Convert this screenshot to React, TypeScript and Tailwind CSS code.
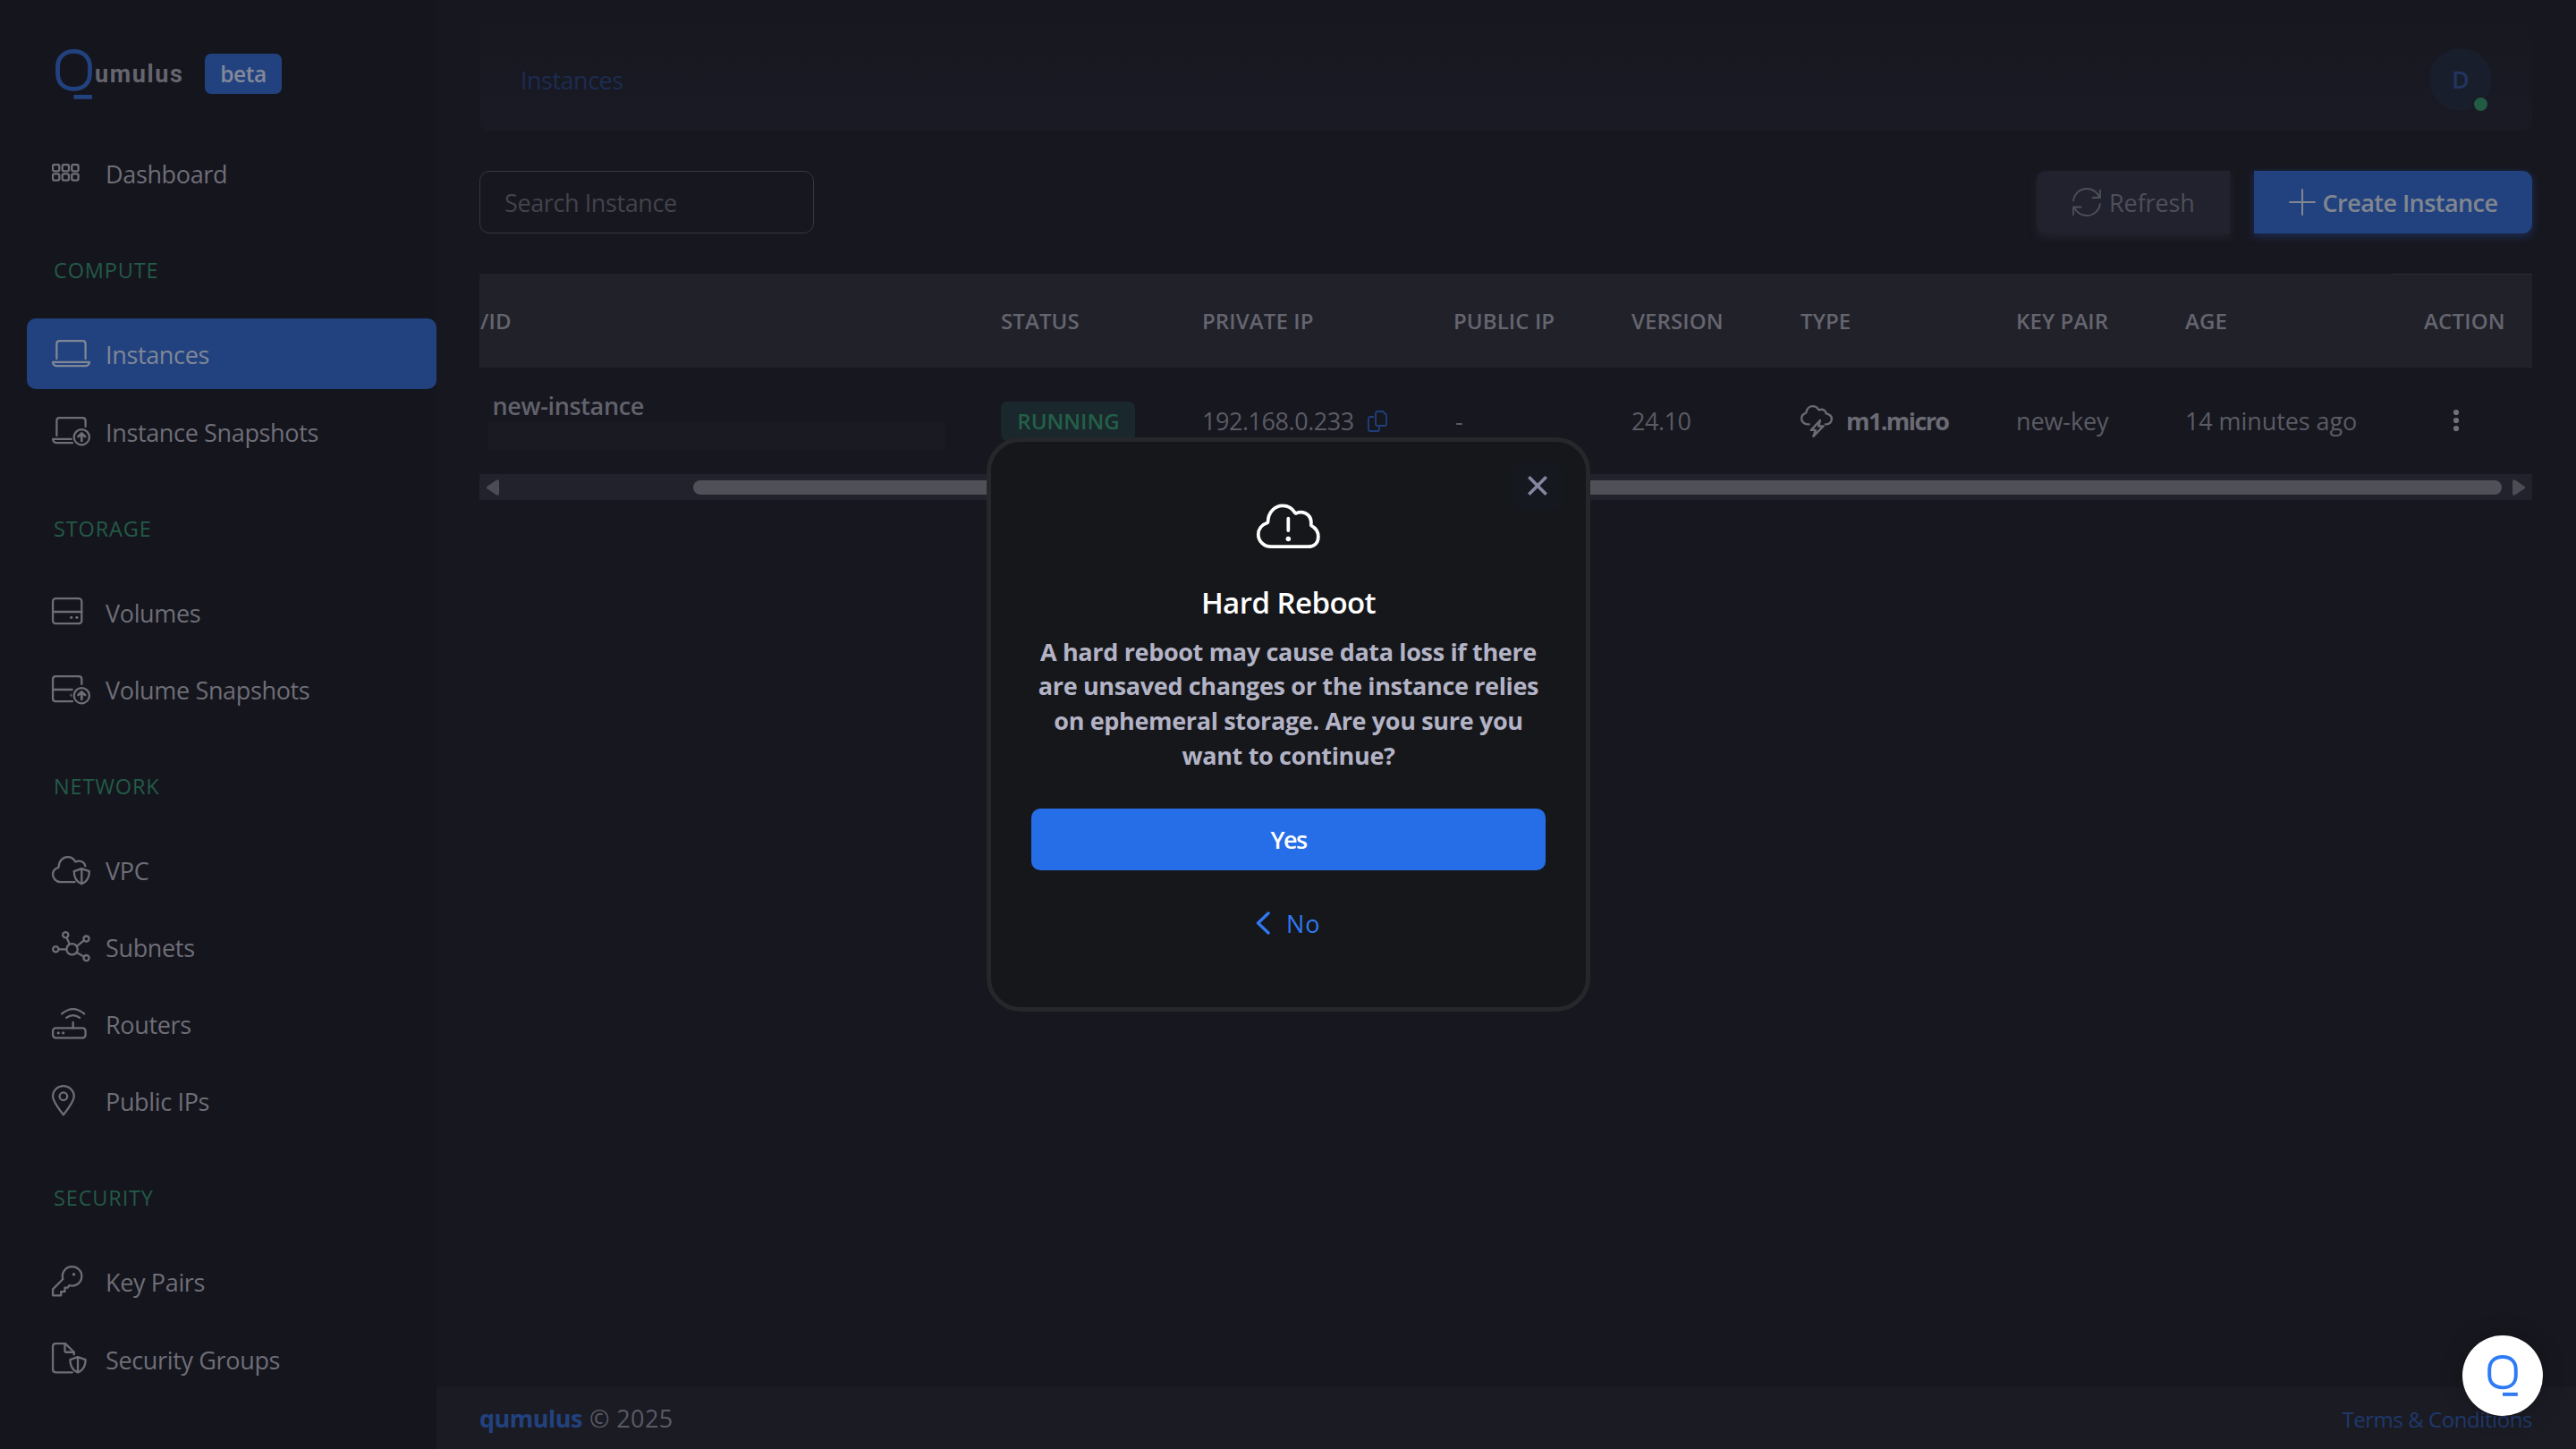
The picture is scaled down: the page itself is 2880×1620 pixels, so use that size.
import type { ReactNode } from "react";
import { clsx } from "clsx";

interface IconProps {
    w: number;
    children: ReactNode;
    className?: string;
}

// Light line icons, drawn on a 512 unit high grid
function Icon({ w, children, className = "h-[34.4px]" }: IconProps) {
    return (
        <svg
            viewBox={`0 0 ${w} 512`}
            className={clsx("w-auto overflow-visible", className)}
            fill="none"
            stroke="currentColor"
            strokeWidth={34}
            strokeLinecap="round"
            strokeLinejoin="round"
        >
            {children}
        </svg>
    );
}

const Dot = ({ x, y, r = 24 }: { x: number; y: number; r?: number }) => (
    <circle cx={x} cy={y} r={r} fill="currentColor" stroke="none" />
);

const UpBadge = () => (
    <>
        <circle cx="496" cy="368" r="128" />
        <path d="M496 432V308M440 358l56-54 56 54" strokeWidth="40" />
    </>
);

const Shield = ({ x = 0 }: { x?: number }) => (
    <path d={`M${496 + x} 240l-128 44c0 92 38 176 128 212c90-36 128-120 128-212zV496`} />
);

const GridIcon = () => (
    <svg viewBox="0 0 31 20" className="w-[31px] h-5" fill="none" stroke="currentColor" strokeWidth="2.3">
        {[1, 11.7, 22.3].map((x) => [1, 11.3].map((y) => (
            <rect key={`${x}-${y}`} x={x} y={y} width="7.3" height="7.3" rx="1.8" />
        )))}
    </svg>
);

const LaptopIcon = () => (
    <Icon w={640}>
        <path d="M80 344V96c0-27 21-48 48-48h384c27 0 48 21 48 48v248" />
        <path d="M16 400h608c0 35-29 64-64 64H80c-35 0-64-29-64-64z" />
    </Icon>
);

const LaptopUpIcon = () => (
    <Icon w={640}>
        <path d="M80 344V96c0-27 21-48 48-48h384c27 0 48 21 48 48v96" />
        <path d="M326 400H16c0 35 29 64 64 64h262" />
        <UpBadge />
    </Icon>
);

const DriveIcon = () => (
    <Icon w={512}>
        <rect x="16" y="48" width="480" height="416" rx="48" />
        <path d="M16 268h480" />
        <Dot x={324} y={362} />
        <Dot x={416} y={362} />
    </Icon>
);

const DriveUpIcon = () => (
    <Icon w={640}>
        <path d="M496 180V96c0-27-21-48-48-48H64c-27 0-48 21-48 48v320c0 27 21 48 48 48h278" />
        <path d="M16 268h322" />
        <path d="M322 340a24 24 0 0 0 0 44z" fill="currentColor" strokeWidth="8" />
        <UpBadge />
    </Icon>
);

const CloudShieldIcon = () => (
    <Icon w={640}>
        <path d="M380 464H144C73 464 16 407 16 340c0-54 34-100 92-118c4-2 6-6 6-12c2-92 66-162 150-162c54 0 98 28 124 72c4 6 10 8 16 4c12-6 26-10 44-10c58 0 98 36 108 84" />
        <Shield />
    </Icon>
);

const NetworkIcon = () => (
    <Icon w={640}>
        <circle cx="336" cy="302" r="92" />
        <circle cx="64" cy="302" r="46" />
        <circle cx="228" cy="64" r="46" />
        <circle cx="574" cy="128" r="46" />
        <circle cx="574" cy="448" r="46" />
        <path d="M112 302h130M246 110l46 100M534 154l-118 96M534 424l-114-62" />
    </Icon>
);

const RouterIcon = () => (
    <Icon w={576}>
        <rect x="16" y="334" width="544" height="162" rx="48" />
        <Dot x={108} y={415} />
        <Dot x={188} y={415} />
        <path d="M352 236v96M166 96Q352-64 538 96M240 162q112-84 224 0" />
    </Icon>
);

const PinIcon = () => (
    <Icon w={384}>
        <path d="M192 16C95 16 16 93 16 188c0 80 100 210 176 308c76-98 176-228 176-308C368 93 289 16 192 16z" />
        <circle cx="192" cy="190" r="64" />
    </Icon>
);

const KeyIcon = () => (
    <Icon w={512}>
        <path d="M184 224L16 392V496H152V432H216V368H264L288 328A160 160 0 1 0 184 224z" />
        <Dot x={366} y={144} r={26} />
    </Icon>
);

const FileShieldIcon = () => (
    <Icon w={576}>
        <path d="M340 496H64c-27 0-48-21-48-48V64c0-27 21-48 48-48h160l144 144v40" />
        <path d="M216 16v120c0 13 11 24 24 24h128" />
        <Shield x={-64} />
    </Icon>
);

const CloudBoltIcon = () => (
    <Icon w={512} className="h-9">
        <path d="M136 304h-24C59 304 16 262 16 212c0-42 26-72 64-86c8-4 10-8 12-16C100 56 140 16 192 16c44 0 74 20 92 52c6 8 12 8 20 4c50-14 98 10 104 60c46 12 88 36 88 86c0 48-36 86-84 86h-16" />
        <path d="M312 240L168 396h72l-36 100L364 334h-76z" />
    </Icon>
);

const CloudAlertIcon = () => (
    <Icon w={640} className="h-[56.5px] -my-[3px] text-white">
        <path d="M144 464C73 464 16 407 16 340c0-54 34-100 92-118c4-2 6-6 6-12c2-92 66-162 150-162c54 0 98 28 124 72c4 6 10 8 16 4c12-6 26-10 44-10c58 0 104 46 104 104c0 10-1 14-2 20c-1 5 0 9 4 12c46 26 70 62 70 112c0 66-44 102-104 102z" />
        <path d="M320 178v122" />
        <Dot x={320} y={386} r={25} />
    </Icon>
);

const CopyIcon = () => (
    <svg viewBox="0 0 22 24" className="w-[22px] h-6" fill="none" stroke="currentColor" strokeWidth="1.8" strokeLinejoin="round">
        <path d="M11 1h6l4 4v10a2 2 0 0 1-2 2h-8a2 2 0 0 1-2-2V3a2 2 0 0 1 2-2z" />
        <path d="M7 7H3a2 2 0 0 0-2 2v12a2 2 0 0 0 2 2h8a2 2 0 0 0 2-2v-3" />
    </svg>
);

const RefreshIcon = () => (
    <svg viewBox="0 0 32 32" className="size-8" fill="none" stroke="currentColor" strokeWidth="1.8" strokeLinecap="round" strokeLinejoin="round">
        <path d="M1 14.5C2 7 8 1 16 1c6 0 11 3 14.5 9.5M31 2.5V11h-8.5" />
        <path d="M31 18c-1 7-7 13-15 13-6 0-11-3-14.5-9.5M1 30v-8.5h8.5" />
    </svg>
);

const LogoMark = ({ className }: { className?: string }) => (
    <svg viewBox="0 0 41 56" className={className} fill="none" stroke="currentColor" strokeWidth="4.8">
        <path d="M20.5 2.4C31 2.4 38.5 8.5 38.5 20v7C38.5 38.5 31 44.3 20.5 44.3S2.5 38.5 2.5 27v-7C2.5 8.5 10 2.4 20.5 2.4z" />
        <path d="M20.5 53.4H41" />
    </svg>
);

interface NavItem {
    label: string;
    icon: ReactNode;
    active?: boolean;
}

const sections: { title?: string; items: NavItem[] }[] = [
    { items: [{ label: "Dashboard", icon: <GridIcon /> }] },
    {
        title: "COMPUTE",
        items: [
            { label: "Instances", icon: <LaptopIcon />, active: true },
            { label: "Instance Snapshots", icon: <LaptopUpIcon /> },
        ],
    },
    {
        title: "STORAGE",
        items: [
            { label: "Volumes", icon: <DriveIcon /> },
            { label: "Volume Snapshots", icon: <DriveUpIcon /> },
        ],
    },
    {
        title: "NETWORK",
        items: [
            { label: "VPC", icon: <CloudShieldIcon /> },
            { label: "Subnets", icon: <NetworkIcon /> },
            { label: "Routers", icon: <RouterIcon /> },
            { label: "Public IPs", icon: <PinIcon /> },
        ],
    },
    {
        title: "SECURITY",
        items: [
            { label: "Key Pairs", icon: <KeyIcon /> },
            { label: "Security Groups", icon: <FileShieldIcon /> },
        ],
    },
];

function Sidebar() {
    return (
        <aside className="w-[488px] shrink-0 bg-[#15151d]">
            <div className="h-[154.3px] pl-[61.5px] pt-[54.5px] flex items-start">
                <LogoMark className="w-[41px] h-14 text-[#22427f]" />
                <span className="ml-[3.5px] w-[123px] mt-[9px] text-[27px] leading-[38px] font-bold tracking-[1.6px] text-[#65656f] font-['Roboto',sans-serif]">umulus</span>
                <span className="mt-[5.5px] w-[86px] h-[45px] rounded-[7px] bg-[#22427f] text-[#83899a] text-[24.5px] leading-[46px] text-center font-semibold tracking-[-0.4px]">
                    beta
                </span>
            </div>

            <nav>
                {sections.map((section, i) => (
                    <div key={i}>
                        {section.title && (
                            <div className="h-[115.8px] pt-[46px] pl-[60px] text-[23.5px] leading-8 tracking-[0.85px] text-[#235a47]">
                                {section.title}
                            </div>
                        )}
                        {section.items.map((item) => (
                            <a
                                key={item.label}
                                className={clsx(
                                    "ml-[30px] h-[78.4px] mb-[7.8px] pl-7 flex items-center rounded-[10px] text-[27px]",
                                    item.active ? "bg-[#22427f] text-[#808796]" : "text-[#6e6e78]"
                                )}
                            >
                                <span className="w-[60px] flex">{item.icon}</span>
                                <span className="pt-[4.5px] tracking-[-0.35px]">{item.label}</span>
                            </a>
                        ))}
                    </div>
                ))}
            </nav>
        </aside>
    );
}

function Navbar() {
    return (
        <header className="h-[146px] pt-8 pl-[46px] pr-[45px] flex items-center justify-between rounded-b-[12px] bg-linear-to-b from-[#17171f] from-10% to-[#1a1a25]">
            <span className="pt-[2px] text-[27px] tracking-[-0.5px] text-[#1c2c50]">Instances</span>
            <div className="relative size-[70px] rounded-full bg-[#191e2c] flex items-center justify-center text-[27px] font-semibold text-[#22345f]">
                D
                <span className="absolute right-[2.5px] -bottom-[3px] size-[21px] rounded-full border-3 border-[#1a1b25] bg-[#215c43]" />
            </div>
        </header>
    );
}

function Toolbar() {
    return (
        <div className="mt-[45px] h-[70px] flex justify-between">
            <input
                className="w-[374px] px-[27px] pt-[3px] rounded-[11px] border border-[#36363f] text-[27px] tracking-[-0.4px] placeholder:text-[#43434c]"
                placeholder="Search Instance"
            />
            <div className="flex gap-[27px]">
                <button className="w-[216px] pl-10 flex items-center gap-[9px] rounded-l-[11px] bg-[#21222d] text-[27px] font-medium text-[#4d4f5b] shadow-[0_4px_8px_1px_#21222d]">
                    <RefreshIcon />
                    <span className="pt-[3px] tracking-[-0.1px]">Refresh</span>
                </button>
                <button className="w-[311px] pl-[39px] flex items-center gap-[7.5px] rounded-r-[11px] bg-[#22427f] text-[27px] font-semibold tracking-[-0.55px] text-[#81868f] shadow-[0_3px_8px_1px_#1d2b50]">
                    <svg viewBox="0 0 30 30" className="size-[30px]" fill="none" stroke="currentColor" strokeWidth="2">
                        <path d="M15 1v28M1 15h28" strokeLinecap="round" />
                    </svg>
                    <span className="pt-[3px]">Create Instance</span>
                </button>
            </div>
        </div>
    );
}

const gridCols = "grid grid-cols-[583px_225px_281px_199px_189px_241px_189px_231px_1fr]";

function InstanceTable() {
    return (
        <section className="mt-[45px] overflow-hidden">
            <div className={clsx(gridCols, "h-[105px] items-center bg-[#21212a] text-2xl font-semibold tracking-[0.1px] text-[#65656f]")}>
                <span className="pl-px">/ID</span>
                <span>STATUS</span>
                <span>PRIVATE IP</span>
                <span>PUBLIC IP</span>
                <span>VERSION</span>
                <span>TYPE</span>
                <span>KEY PAIR</span>
                <span>AGE</span>
                <span className="self-stretch flex items-center pl-9 border-t border-[#2b2b34] tracking-[0.2px]">ACTION</span>
            </div>

            <div className={clsx(gridCols, "h-[119px] items-center text-[27px] tracking-[-0.45px] text-[#5b5b65]")}>
                <div className="self-start pt-6">
                    <div className="pl-[14.5px] leading-[37px] font-semibold tracking-[-0.35px] text-[#62626c]">new-instance</div>
                    <div className="ml-2.5 w-[510px] h-[31px] bg-[#1a1a23]" />
                </div>
                <span className="w-[150px] h-11 pl-px rounded-[7px] flex items-center justify-center bg-[#1a272c] text-2xl font-semibold tracking-normal text-[#236047]">
                    RUNNING
                </span>
                <span className="flex items-center gap-[15px]">
                    <span className="pt-[2px]">192.168.0.233</span>
                    <span className="text-[#203f7c]"><CopyIcon /></span>
                </span>
                <span className="pt-[2px] pl-[2px]">-</span>
                <span className="pt-[2px]">24.10</span>
                <span className="flex items-center gap-[15px] font-bold tracking-[-1.6px] text-[#6b6b75]">
                    <CloudBoltIcon />
                    <span className="pt-[2px]">m1.micro</span>
                </span>
                <span className="pt-[2px] tracking-[-0.1px]">new-key</span>
                <span className="pt-[2px] tracking-[-0.09px]">14 minutes ago</span>
                <span className="pl-[68px] flex">
                    <svg viewBox="0 0 8 26" className="w-2 h-[26px] -mt-[2px] fill-[#70707a]">
                        <circle cx="4" cy="4" r="3.1" />
                        <circle cx="4" cy="13" r="3.1" />
                        <circle cx="4" cy="22" r="3.1" />
                    </svg>
                </span>
            </div>

            <div className="h-[29px] px-2 flex items-center bg-[#22222c]">
                <svg viewBox="0 0 14 18" className="w-[14px] h-[18px] fill-[#4c4c55]">
                    <path d="M0.6 7.8L10.8 0.7Q14-0.8 14 2.5V15.5Q14 18.8 10.8 17.3L0.6 10.2Q-0.6 9 0.6 7.8z" />
                </svg>
                <div className="ml-auto mr-3 w-[2022px] h-4 rounded-full bg-[#505059]" />
                <svg viewBox="0 0 14 18" className="w-[14px] h-[18px] fill-[#4c4c55]">
                    <path d="M13.4 7.8L3.2 0.7Q0-0.8 0 2.5V15.5Q0 18.8 3.2 17.3L13.4 10.2Q14.6 9 13.4 7.8z" />
                </svg>
            </div>
        </section>
    );
}

function Footer() {
    return (
        <footer className="h-[69px] shrink-0 pl-12 pr-[49px] flex items-center justify-between bg-[#1b1b24] text-[27px] text-[#5a5a64]">
            <div className="pt-[2px]">
                <span className="font-bold tracking-[-0.5px] text-[#22427f]">qumulus</span>
                <span className="ml-2 tracking-[0.4px]">© 2025</span>
            </div>
            <span className="pt-[3px] text-2xl tracking-[-0.43px] text-[#1f396c]">Terms &amp; Conditions</span>
        </footer>
    );
}

function RebootDialog() {
    return (
        <div className="fixed inset-0 pl-px flex items-center justify-center">
            <div role="dialog" className="relative w-[675px] h-[642px] pt-[69px] px-[45px] flex flex-col items-center rounded-[38px] border-5 border-[#26272a] bg-[#16171a]">
                <button className="absolute top-[21.5px] right-[27px] size-[54px] rounded-md flex items-center justify-center bg-[#15181f] text-[#8587a0]">
                    <svg viewBox="0 0 22 22" className="size-[22px]" fill="none" stroke="currentColor" strokeWidth="3.6">
                        <path d="M1.3 1.3l19.4 19.4M20.7 1.3L1.3 20.7" />
                    </svg>
                </button>
                <CloudAlertIcon />
                <h2 className="mt-[38px] text-[33px] leading-[44px] font-semibold tracking-[-0.55px] text-white">Hard Reboot</h2>
                <p className="mt-[14px] text-center text-[27px] leading-[38.8px] font-bold tracking-[-0.35px] text-[#b3b3c6] whitespace-nowrap">
                    A hard reboot may cause data loss if there
                    <br />
                    are unsaved changes or the instance relies
                    <br />
                    on ephemeral storage. Are you sure you
                    <br />
                    want to continue?
                </p>
                <button className="mt-[39px] pt-[2px] w-full h-[69px] shrink-0 rounded-[10px] bg-[#256ee8] text-[27px] font-semibold tracking-[-1.5px] text-white">
                    Yes
                </button>
                <button className="mt-10 flex items-center gap-[17.5px] text-[27px] leading-[38px] tracking-[1px] text-[#2f78f0]">
                    <svg viewBox="0 0 16 26" className="w-4 h-[26px]" fill="none" stroke="currentColor" strokeWidth="3.4" strokeLinecap="round" strokeLinejoin="round">
                        <path d="M14 2L2.5 13L14 24" />
                    </svg>
                    <span className="pt-px">No</span>
                </button>
            </div>
        </div>
    );
}

export default function App() {
    return (
        <div className="h-[1620px] flex overflow-hidden bg-[#17171f] font-['Open_Sans',sans-serif]">
            <Sidebar />
            <div className="flex-1 min-w-0 flex flex-col">
                <main className="flex-1 pl-12 pr-[49px]">
                    <Navbar />
                    <Toolbar />
                    <InstanceTable />
                </main>
                <Footer />
            </div>
            <RebootDialog />
            <button className="fixed right-[37px] bottom-[37px] size-[90px] rounded-full bg-white flex items-center justify-center shadow-[0_0_24px_rgba(0,0,0,0.25)]">
                <LogoMark className="w-[34px] h-[46px] text-[#2f7bf6]" />
            </button>
        </div>
    );
}
